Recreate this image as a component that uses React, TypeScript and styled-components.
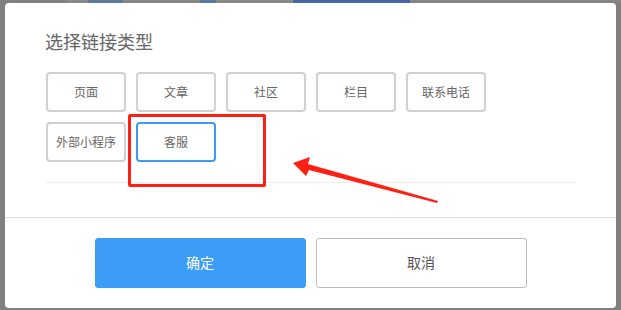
import React from "react";
import styled, { createGlobalStyle } from "styled-components";

const GlobalStyle = createGlobalStyle`
  html, body { margin: 0; padding: 0; background: #808080; }
  body { font-family: "Noto Sans CJK SC", "Noto Sans", sans-serif; }
  * { box-sizing: border-box; }
`;

const Page = styled.div`
  position: relative;
  width: 621px;
  height: 310px;
  background: #808080;
  overflow: hidden;
  display: flex;
  flex-direction: column;
`;

const Strip = styled.div`
  display: flex;
  height: 3px;
  flex: none;
`;

const Segment = styled.div<{ $w: number; $c: string }>`
  width: ${(p) => p.$w}px;
  height: 100%;
  background: ${(p) => p.$c};
  flex: none;
`;

const Modal = styled.div`
  margin: 0 5px 0 5px;
  height: 305px;
  background: #ffffff;
  border-radius: 4px;
  display: flex;
  flex-direction: column;
`;

const Body = styled.div`
  padding: 26px 40px 0 41px;
  height: 214px;
  flex: none;
`;

const Title = styled.div`
  font-size: 18px;
  line-height: 24px;
  color: #666666;
  margin-left: -1px;
`;

const Options = styled.div`
  margin-top: 19px;
  display: grid;
  grid-template-columns: repeat(5, 80px);
  grid-auto-rows: 40px;
  gap: 10px;
`;

const Option = styled.div<{ $active?: boolean }>`
  display: flex;
  align-items: center;
  justify-content: center;
  border: 2px solid ${(p) => (p.$active ? "#3d9cf2" : "#d0d0d0")};
  border-radius: 4px;
  font-size: 12px;
  line-height: 1;
  color: #666666;
  background: #fff;
`;

const Divider = styled.div`
  margin-top: 20px;
  border-top: 1px solid #ececec;
`;

const Footer = styled.div`
  border-top: 1px solid #dddddd;
  padding: 20px 0;
  display: flex;
  justify-content: center;
  gap: 10px;
`;

const FooterButton = styled.div<{ $primary?: boolean }>`
  width: 211px;
  height: 50px;
  display: flex;
  align-items: center;
  justify-content: center;
  border-radius: 3px;
  font-size: 14px;
  line-height: 1;
  padding-bottom: 2px;
  background: ${(p) => (p.$primary ? "#3d9cf5" : "#ffffff")};
  color: ${(p) => (p.$primary ? "#ffffff" : "#555555")};
  border: 1px solid ${(p) => (p.$primary ? "#3d9cf5" : "#bdbdbd")};
`;

const Highlight = styled.div`
  position: absolute;
  left: 128px;
  top: 114px;
  width: 138px;
  height: 73px;
  border: 3px solid #fe2015;
  border-radius: 2px;
  pointer-events: none;
`;

const ArrowLayer = styled.svg`
  position: absolute;
  left: 0;
  top: 0;
  pointer-events: none;
`;

const segments: [number, string][] = [
  [66, "#808080"],
  [22, "#888888"],
  [35, "#5e7c98"],
  [77, "#868686"],
  [16, "#5a79a0"],
  [77, "#8a8a8a"],
  [117, "#4766a6"],
  [211, "#868686"],
];

const row = ["页面", "文章", "社区", "栏目", "联系电话", "外部小程序"];

export default function App() {
  return (
    <>
      <GlobalStyle />
      <Page>
        <Strip>
          {segments.map(([w, c], i) => (
            <Segment key={i} $w={w} $c={c} />
          ))}
        </Strip>
        <Modal>
          <Body>
            <Title>选择链接类型</Title>
            <Options>
              {row.map((t) => (
                <Option key={t}>{t}</Option>
              ))}
              <Option $active>客服</Option>
            </Options>
            <Divider />
          </Body>
          <Footer>
            <FooterButton $primary>确定</FooterButton>
            <FooterButton>取消</FooterButton>
          </Footer>
        </Modal>
        <Highlight />
        <ArrowLayer width="621" height="310" viewBox="0 0 621 310">
          <polygon
            points="293,163 310,157 308,164 438,201 437,203 309,170 306,176"
            fill="#fe2015"
          />
        </ArrowLayer>
      </Page>
    </>
  );
}
